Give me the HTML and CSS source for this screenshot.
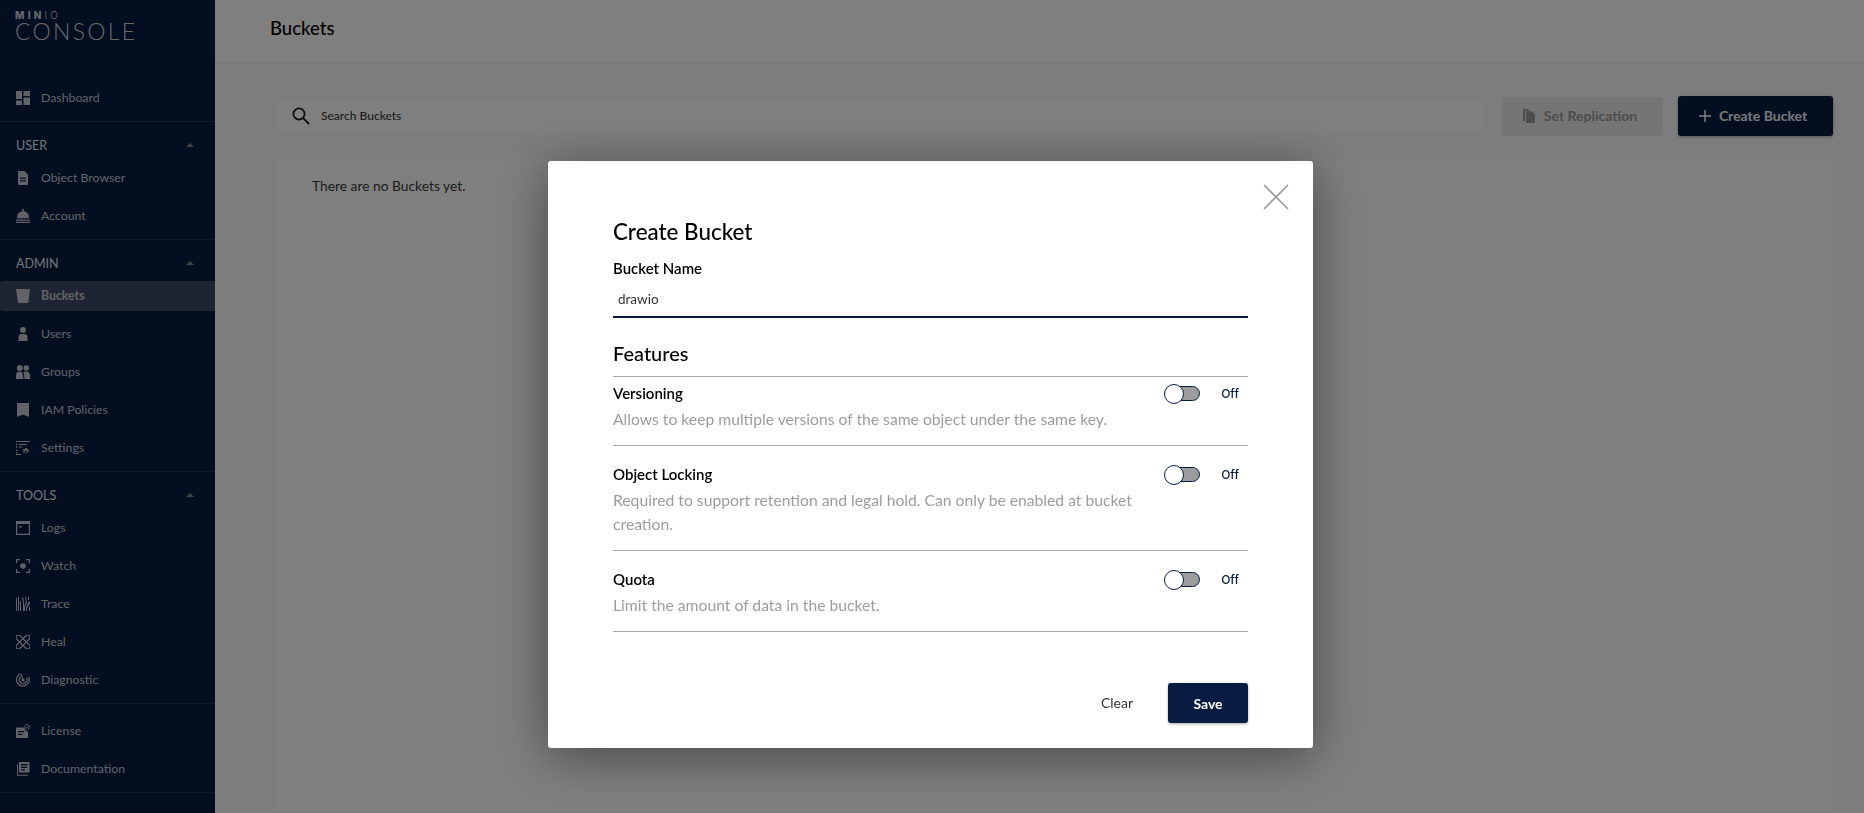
FILE: index.html
```html
<!DOCTYPE html>
<html lang="en">
<head>
<meta charset="utf-8">
<title>MinIO Console - Buckets</title>
<link rel="stylesheet" href="styles.css">
</head>
<body>
<div class="app">
  <aside class="sidebar">
    <div class="logo">
      <div class="logo-top"><b>MIN</b><span>IO</span></div>
      <div class="logo-main">CONSOLE</div>
    </div>
    <nav>
      <section class="nav-section">
        <a class="nav-item"><svg class="ico" viewBox="0 0 14 14"><path d="M0 0h6v8H0zM0 9.500h6V14H0zM7.500 0H14v5H7.500zM7.500 6.500H14V14H7.500z"/></svg>Dashboard</a>
      </section>
      <section class="nav-section">
        <div class="nav-head">USER<i class="caret"></i></div>
        <div class="nav-items">
          <a class="nav-item"><svg class="ico" viewBox="0 0 14 14"><path fill-rule="evenodd" d="M2.500 0h6l3.500 3.500V13a1 1 0 0 1-1 1H3a1 1 0 0 1-1-1V.5zM4 6.500v1.200h6V6.500zM4 9.200v1.200h6V9.200z"/></svg>Object Browser</a>
          <a class="nav-item"><svg class="ico" viewBox="0 0 14 14"><path d="M6 0h2v1H7.600v1.300C11 2.600 13 5.300 13 9.300H1c0-4 2-6.700 5.400-7V1H6zM0 10.500h14v1.300H0zM0 12.800h14V14H0z"/></svg>Account</a>
        </div>
      </section>
      <section class="nav-section">
        <div class="nav-head">ADMIN<i class="caret"></i></div>
        <div class="nav-items">
          <a class="nav-item active"><svg class="ico" viewBox="0 0 14 14"><path d="M0 0h14l-1.800 14H2.200z"/></svg>Buckets</a>
          <a class="nav-item"><svg class="ico" viewBox="0 0 14 14"><circle cx="7" cy="3" r="3"/><path d="M2.500 14V10a3 3 0 0 1 3-3h3a3 3 0 0 1 3 3v4z"/></svg>Users</a>
          <a class="nav-item"><svg class="ico" viewBox="0 0 14 14"><circle cx="3.800" cy="3" r="2.900"/><circle cx="10.300" cy="3" r="2.700"/><path d="M0 14v-3.500C0 8 1.800 6.500 3.800 6.500S7 8.500 7 11l.5 3zM8.500 14l-.4-4C8 8.400 7.400 7.500 7.200 7c.8-.5 2-.6 3-.6 2.200 0 3.800 1.600 3.800 4V14z"/></svg>Groups</a>
          <a class="nav-item"><svg class="ico" viewBox="0 0 14 14"><path d="M1 0h12v14L7 11.500 1 14z"/></svg>IAM Policies</a>
          <a class="nav-item"><svg class="ico" viewBox="0 0 14 14"><path d="M0 0h14v1H0zM0 2.500h1.200v1.600H0zM0 5.500h1.200v1.600H0zM0 8.500h1.200v1.600H0zM0 11.500h1.200v1.300H0zM0 13h5v1H0zM3 3h8v1H3zM3 5.500h3.500v1H3z"/><path fill-rule="evenodd" d="M9.500 7l1.200.1.300 1.100 1.100-.4.700 1-.8.800.8.900-.7 1-1.100-.4-.3 1.100H8.900l-.3-1.100-1.100.4-.7-1 .8-.9-.8-.8.700-1 1.100.4zM9.800 9.400a1 1 0 1 0 .01 0z"/></svg>Settings</a>
        </div>
      </section>
      <section class="nav-section">
        <div class="nav-head">TOOLS<i class="caret"></i></div>
        <div class="nav-items">
          <a class="nav-item"><svg class="ico" viewBox="0 0 14 14"><path fill-rule="evenodd" d="M0 0h14v14H0zM1.200 3v9.800h11.600V3zM3 5.200h3v1.200H3z"/></svg>Logs</a>
          <a class="nav-item"><svg class="ico" viewBox="0 0 14 14"><path d="M0 0h4v1.300H1.300V4H0zM10 0h4v4h-1.300V1.300H10zM0 10h1.300v2.700H4V14H0zM12.700 10H14v4h-4v-1.300h2.700z"/><circle cx="7" cy="7" r="2.800"/></svg>Watch</a>
          <a class="nav-item"><svg class="ico" viewBox="0 0 14 14"><path d="M0 1v13h1V1zM2 0v14h1V0zM4 4v10h1V4zM6 1l1 4v9h1V5L7 0zM9 0l1 5-2 5v4h1v-3.500L11 6 10 0zM12 0v3h1V0zM12 5v2l-2 4v3h1v-2.500l3-5V5zM13 10v4h1v-4z"/></svg>Trace</a>
          <a class="nav-item"><svg class="ico" viewBox="0 0 14 14"><g fill="none" stroke="currentColor" stroke-width="1.200"><rect x="-1.900" y="4.600" width="17.800" height="4.800" rx="2.400" transform="rotate(45 7 7)"/><rect x="-1.900" y="4.600" width="17.800" height="4.800" rx="2.400" transform="rotate(-45 7 7)"/></g></svg>Heal</a>
          <a class="nav-item"><svg class="ico" viewBox="0 0 14 14"><g fill="none" stroke="currentColor" stroke-width="1.300"><path d="M4 1.200A6.300 6.300 0 1 0 12.500 4"/><path d="M5 3.700A3.800 3.800 0 1 0 10.400 5"/></g><circle cx="7" cy="7" r="1.600"/><path d="M6.500 6.500 4 .8l1-.4L7.500 6z"/></svg>Diagnostic</a>
        </div>
      </section>
      <section class="nav-section foot">
        <a class="nav-item"><svg class="ico" viewBox="0 0 14 14"><path fill-rule="evenodd" d="M0 3.500h8.500a4 4 0 0 0 3.500 4.200V14H0zM2 7v1.200h6V7zM2 9.800V11h4.500V9.800z"/><circle cx="11.200" cy="3" r="2.500" fill="none" stroke="currentColor" stroke-width=".8"/><path d="M10 3l1 1 1.500-1.800" fill="none" stroke="currentColor" stroke-width=".8"/></svg>License</a>
        <a class="nav-item"><svg class="ico" viewBox="0 0 14 14"><path fill-rule="evenodd" d="M3 0h10.500v10.500H3zM5 2v1.500h6.500V2zM5 4.700v1.300h6.500V4.700zM5 7.200v1.200h4V7.200z"/><path d="M1 2.500h1v10.300h10v1H1z"/></svg>Documentation</a>
      </section>
    </nav>
  </aside>

  <main class="main">
    <header class="topbar"><h1>Buckets</h1></header>
    <div class="content">
      <div class="toolbar">
        <label class="search">
          <svg class="search-ico" viewBox="0 0 18 18"><circle cx="7" cy="7" r="5.600"/><path d="M11.200 11.200 17 17"/></svg>
          <input type="text" placeholder="Search Buckets">
        </label>
        <button class="btn btn-disabled"><svg class="rep-ico" viewBox="0 0 12 14"><path d="M0 0h6l.5 1.500H2V12H0z"/><path d="M3 2h5.500L12 5.500V14H3z"/></svg>Set Replication</button>
        <button class="btn btn-primary btn-create"><svg class="plus-ico" viewBox="0 0 12 12"><path d="M5.250 0h1.500v5.250H12v1.500H6.750V12h-1.500V6.750H0v-1.500h5.250z"/></svg>Create Bucket</button>
      </div>
      <div class="card">There are no Buckets yet.</div>
    </div>
  </main>
</div>

<div class="backdrop">
  <div class="modal">
    <button class="close" aria-label="Close"><svg viewBox="0 0 26 26"><path d="M1 1l24 24M25 1 1 25"/></svg></button>
    <h2>Create Bucket</h2>
    <label class="field-label" for="bn">Bucket Name</label>
    <input id="bn" class="field" type="text" value="drawio">
    <h3>Features</h3>
    <div class="feature first">
      <div class="f-title">Versioning</div>
      <div class="toggle-wrap"><span class="toggle"></span><span class="off">Off</span></div>
      <div class="f-desc">Allows to keep multiple versions of the same object under the same key.</div>
    </div>
    <div class="feature middle">
      <div class="f-title">Object Locking</div>
      <div class="toggle-wrap"><span class="toggle"></span><span class="off">Off</span></div>
      <div class="f-desc">Required to support retention and legal hold. Can only be enabled at bucket creation.</div>
    </div>
    <div class="feature last">
      <div class="f-title">Quota</div>
      <div class="toggle-wrap"><span class="toggle"></span><span class="off">Off</span></div>
      <div class="f-desc">Limit the amount of data in the bucket.</div>
    </div>
    <div class="actions">
      <button class="clear">Clear</button>
      <button class="btn btn-primary save">Save</button>
    </div>
  </div>
</div>
</body>
</html>
```
FILE: styles.css
```css
* { box-sizing: border-box; }
html, body { margin: 0; height: 100%; overflow: hidden; }
body { font-family: Lato, "Open Sans", sans-serif; background: #fbfafa; color: #000; }
.app { display: flex; height: 813px; overflow: hidden; }

.sidebar { width: 215px; flex: none; height: 813px; overflow: hidden; background: #081c42; color: #d2d4d9; }
.logo { height: 75px; padding: 11px 0 0 15px; color: #cfd2d8; }
.logo-top { height: 10px; font-size: 10px; line-height: 8px; letter-spacing: 3.200px; font-family: Inter, sans-serif; }
.logo-top b { font-weight: 800; }
.logo-top span { font-weight: 300; }
.logo-main { font-weight: 300; font-size: 23px; line-height: 20px; letter-spacing: 2.300px; }
.nav-section { display: flex; flex-direction: column; padding: 8px 0; border-bottom: 1px solid #2a3a58; }
.nav-section.foot { padding-top: 12px; gap: 8px; }
.nav-head { height: 30px; display: flex; align-items: center; justify-content: space-between; padding: 0 21px 0 16px; font-size: 12.500px; color: #e6e8ec; }
.caret { width: 0; height: 0; border: 4px solid transparent; border-top: 0; border-bottom: 4px solid #7d8694; }
.nav-items { display: flex; flex-direction: column; gap: 8px; padding-top: 3px; }
.nav-item { height: 30px; display: flex; align-items: center; gap: 11px; padding: 0 0 1px 16px; font-size: 12.300px; color: #c4c7ce; }
.nav-item.active { background: #3a4a64; font-weight: 700; border-radius: 3px 0 0 3px; }
.ico { width: 14px; height: 14px; flex: none; fill: currentColor; margin-top: 1px; }

.main { flex: 1; min-width: 0; display: flex; flex-direction: column; }
.topbar { height: 63px; flex: none; display: flex; align-items: center; padding: 0 0 7px 55px; border-bottom: 1px solid #eaedee; background: #fff; }
.topbar h1 { margin: 0; font-size: 18.500px; font-weight: 500; line-height: 24px; }
.content { flex: 1; padding: 33px 31px 0 58px; display: flex; flex-direction: column; gap: 21px; }
.toolbar { display: flex; align-items: center; height: 40px; }
.search { flex: 1; height: 38px; display: flex; align-items: center; gap: 9px; padding-left: 18px; background: #fff; border: 1px solid #f6f6f6; border-radius: 3px; }
.search-ico { width: 18px; height: 18px; fill: none; stroke: #1a1a1a; stroke-width: 1.800; flex: none; }
.search input { flex: 1; border: 0; outline: 0; background: none; padding: 0 0 2px 2px; font: 500 12px Lato, sans-serif; color: #333; }
.search input::placeholder { color: #3c3c3c; opacity: 1; }
.btn { height: 40px; border: 0; border-radius: 3px; font: 700 14px Lato, sans-serif; display: flex; align-items: center; justify-content: center; }
.btn-disabled { width: 161px; margin-left: 16px; padding: 0 5px 1px 0; gap: 9px; background: #eaeaea; color: #9b9b9b; height: 39px; }
.btn-primary { background: #081c42; color: #fff; box-shadow: 0 1px 3px rgba(0,0,0,.35); }
.btn-create { width: 155px; margin-left: 15px; padding: 0 5px 1px 0; gap: 8px; color: #f0f0f0; }
.rep-ico { width: 12px; height: 14px; fill: #9b9b9b; }
.plus-ico { width: 12px; height: 12px; fill: #fff; }
.card { flex: 1; padding: 19px 38px; font-size: 13.800px; line-height: 18px; background: #fff; border: 1px solid #f6f6f6; border-radius: 3px 3px 0 0; color: #393939; }

.backdrop { position: fixed; inset: 0; background: rgba(0,0,0,.5); }
.modal { position: absolute; left: 548px; top: 161px; width: 765px; height: 587px; padding: 58px 65px 0; background: #fff; border-radius: 3px; box-shadow: 0 8px 50px rgba(0,0,0,.45); }
.close { position: absolute; right: 23px; top: 22px; width: 28px; height: 28px; padding: 1px; border: 0; background: none; }
.close svg { display: block; width: 26px; height: 26px; fill: none; stroke: #9a9a9a; stroke-width: 1.600; }
.modal h2 { margin: 0; font-size: 22.400px; font-weight: 500; line-height: 26px; }
.field-label { display: block; margin-top: 13px; font-size: 15px; line-height: 20px; font-weight: 600; }
.field { display: block; width: 100%; height: 39px; margin-top: 1px; padding: 2px 5px 0; border: 0; border-bottom: 2px solid #081c42; outline: 0; font: 13.500px Lato, sans-serif; color: #333; }
.modal h3 { margin: 23px 0 11px; font-size: 20px; font-weight: 500; line-height: 24px; }
.feature { display: grid; grid-template-columns: 1fr auto; padding: 17px 9px 13px 0; border-top: 1px solid #a6a6a6; }
.feature.first { padding-top: 5px; padding-bottom: 14px; }
.feature.middle { padding-bottom: 14px; }
.feature.last { padding-bottom: 14px; border-bottom: 1px solid #a6a6a6; }
.f-title { font-size: 15px; line-height: 22px; font-weight: 600; }
.toggle-wrap { display: flex; align-items: center; gap: 21.500px; height: 22px; }
.toggle { position: relative; display: block; width: 31px; height: 15px; margin-left: 5px; background: #9c9c9c; border: 1px solid #081c42; border-radius: 8px; }
.toggle::before { content: ""; position: absolute; left: -6px; top: -3px; width: 18px; height: 18px; border-radius: 50%; background: #fff; border: 1px solid #081c42; }
.off { font: 500 12px Inter, sans-serif; color: #081c42; }
.f-desc { grid-column: 1 / -1; max-width: 540px; margin-top: 3px; font-size: 15.700px; line-height: 24px; color: #9c9c9c; }
.actions { display: flex; justify-content: flex-end; align-items: center; margin-top: 51px; }
.clear { border: 0; background: none; padding: 0 0 2px; margin-right: 35px; font: 14px Lato, sans-serif; color: #333; }
.save { width: 80px; }
```
